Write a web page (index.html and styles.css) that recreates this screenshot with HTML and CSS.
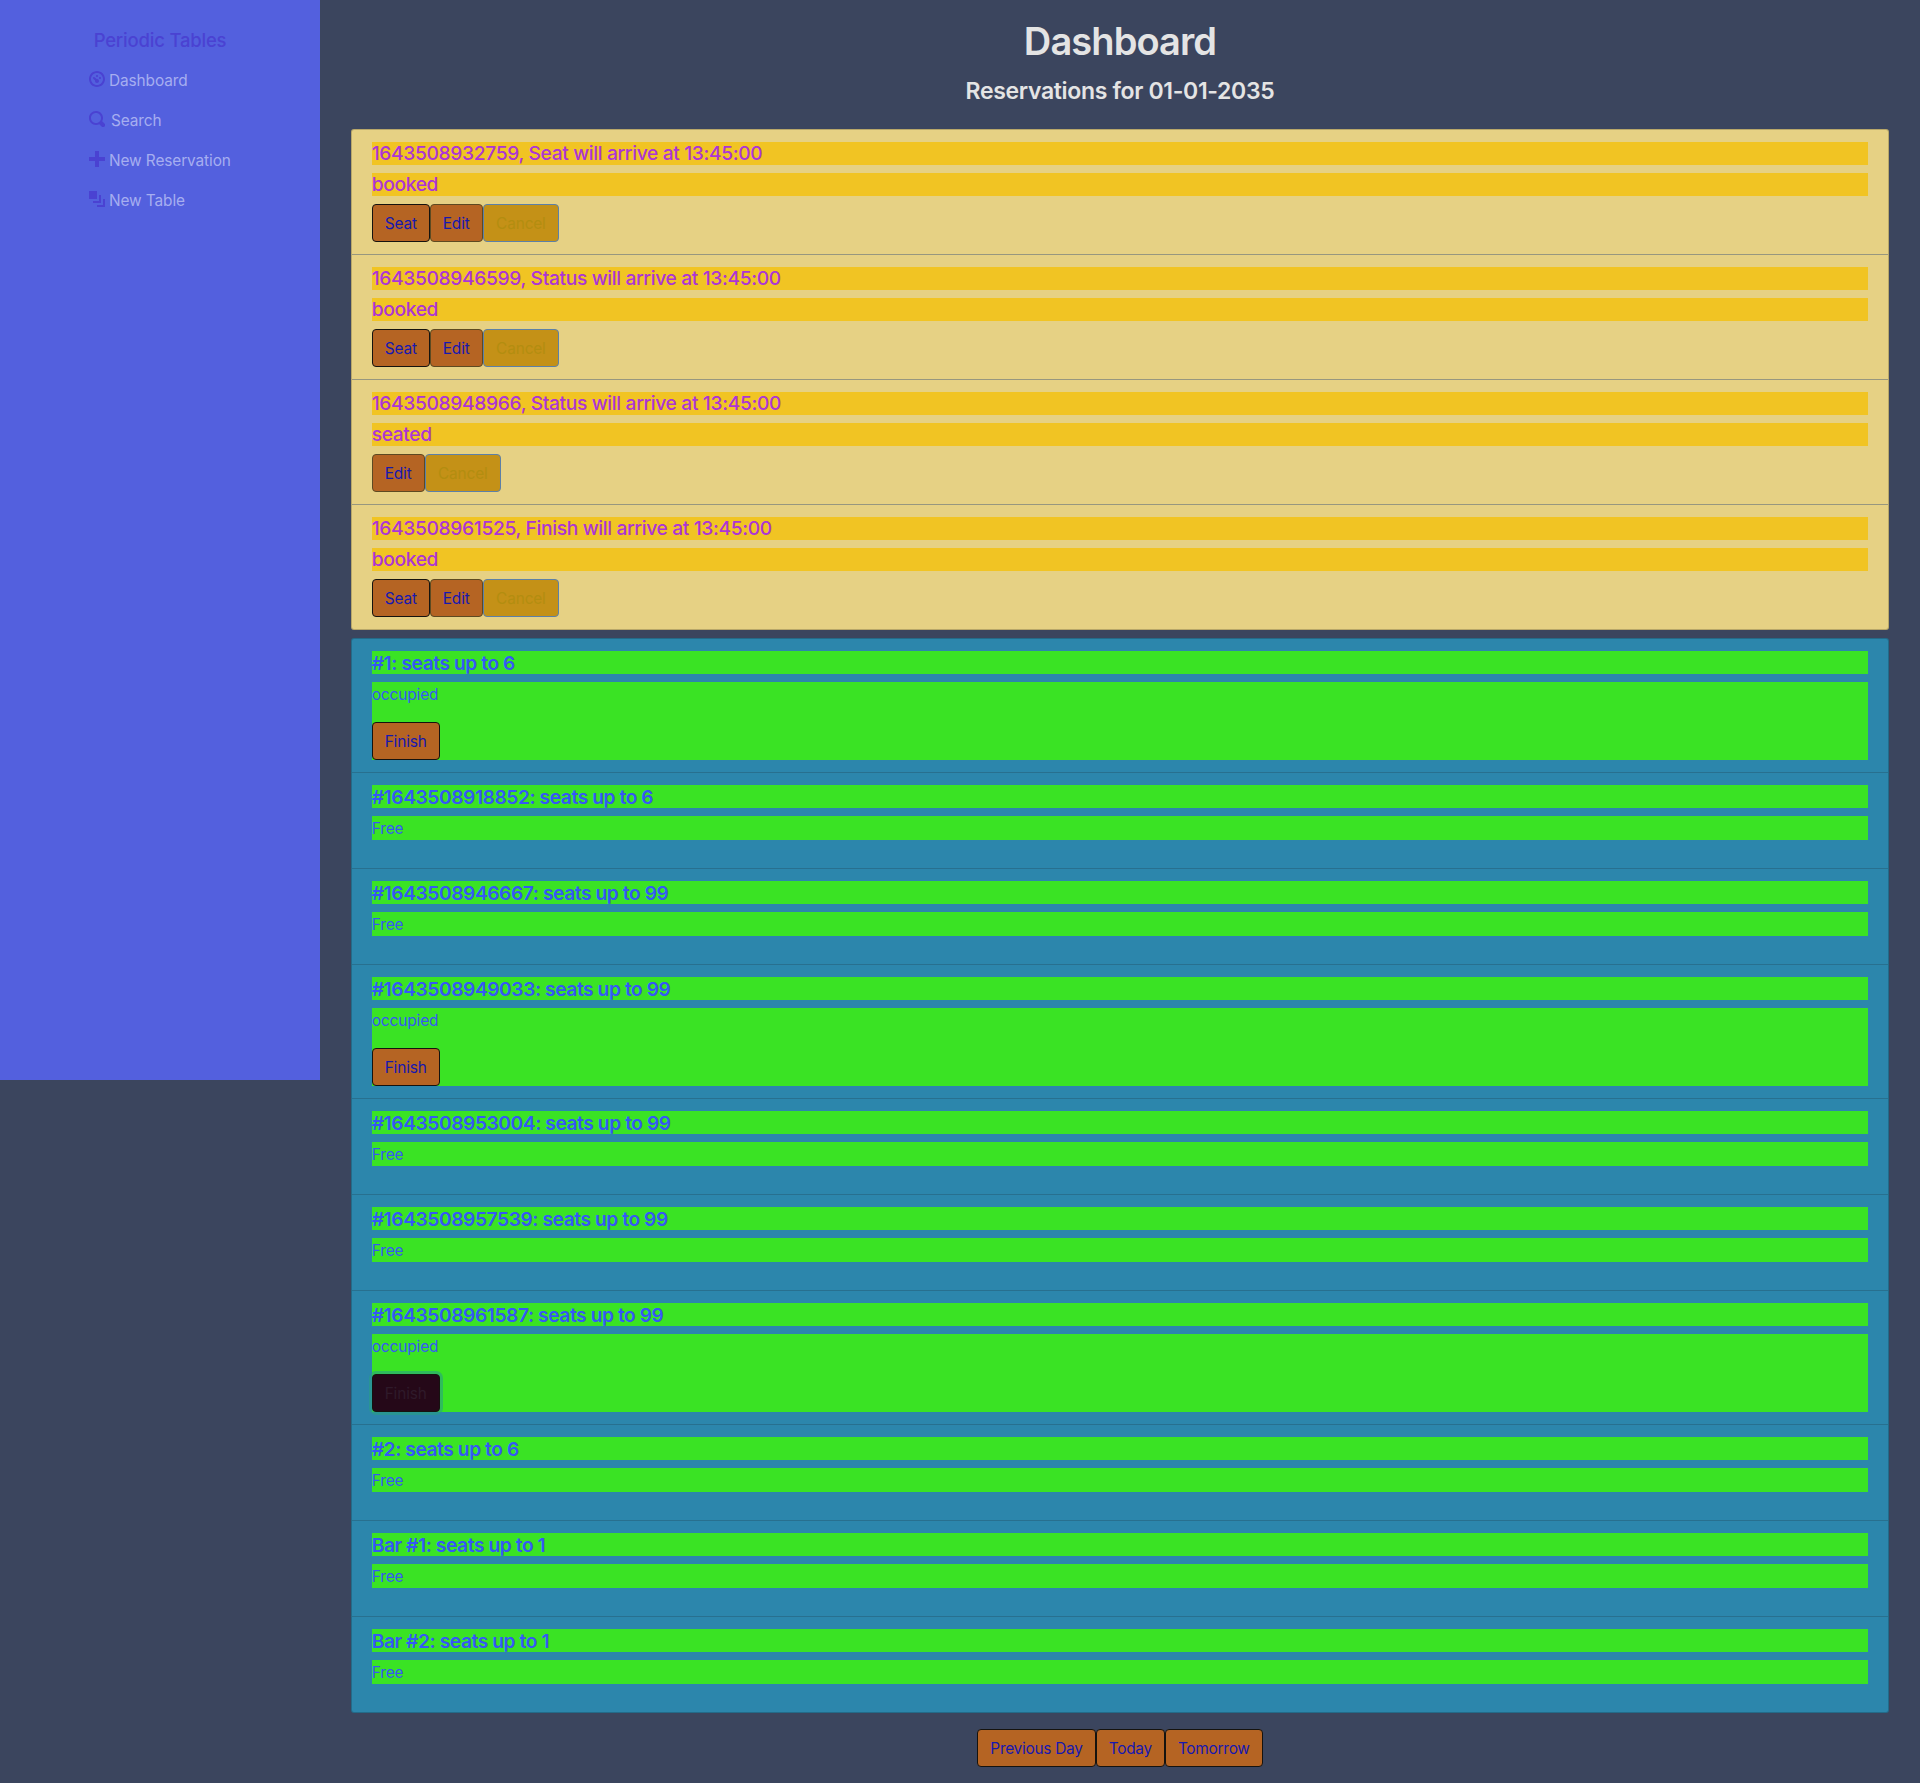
FILE: index.html
```html
<!DOCTYPE html>
<html lang="en">
<head>
  <meta charset="UTF-8">
  <title>Periodic Tables</title>
  <link rel="stylesheet" href="styles.css">
</head>
<body>

  <div class="layout">

    <!-- Sidebar -->
    <nav class="sidebar">
      <div class="brand">Periodic Tables</div>
      <ul class="nav-list">
        <li class="nav-item">
          <svg class="nav-icon" viewBox="0 0 8 8"><path d="M4 0c-2.2 0-4 1.8-4 4s1.8 4 4 4 4-1.8 4-4-1.8-4-4-4zm0 1c1.66 0 3 1.34 3 3s-1.34 3-3 3-3-1.34-3-3 1.34-3 3-3zm0 1c-.28 0-.5.22-.5.5s.22.5.5.5.5-.22.5-.5-.22-.5-.5-.5zm-1.66 1a.5.5 0 0 0-.19.84l.91.91c-.02.08-.06.16-.06.25 0 .55.45 1 1 1s1-.45 1-1-.45-1-1-1c-.09 0-.17.04-.25.06l-.91-.91a.5.5 0 0 0-.44-.16.5.5 0 0 0-.06 0zm3.16 0c-.28 0-.5.22-.5.5s.22.5.5.5.5-.22.5-.5-.22-.5-.5-.5z"/></svg>
          <span>Dashboard</span>
        </li>
        <li class="nav-item nav-item-search">
          <svg class="nav-icon" viewBox="0 0 8 8"><path d="M3.5 0c-1.93 0-3.5 1.57-3.5 3.5s1.57 3.5 3.5 3.5c.59 0 1.17-.14 1.66-.41a1 1 0 0 0 .13.13l1 1a1.02 1.02 0 1 0 1.44-1.44l-1-1a1 1 0 0 0-.16-.13c.27-.49.44-1.06.44-1.66 0-1.93-1.57-3.5-3.5-3.5zm0 1c1.39 0 2.5 1.11 2.5 2.5 0 .66-.24 1.27-.66 1.72-.01.01-.02.02-.03.03a1 1 0 0 0-.13.13c-.44.4-1.04.63-1.69.63-1.39 0-2.5-1.11-2.5-2.5s1.11-2.5 2.5-2.5z"/></svg>
          <span>Search</span>
        </li>
        <li class="nav-item">
          <svg class="nav-icon" viewBox="0 0 8 8"><path d="M3 0v3h-3v2h3v3h2v-3h3v-2h-3v-3h-2z"/></svg>
          <span>New Reservation</span>
        </li>
        <li class="nav-item">
          <svg class="nav-icon" viewBox="0 0 8 8"><path d="M0 0v4h4v-4h-4zm5 2v3h-3v1h4v-4h-1zm2 2v3h-3v1h4v-4h-1z"/></svg>
          <span>New Table</span>
        </li>
      </ul>
    </nav>

    <!-- Main content -->
    <main class="main">
      <h1 class="page-title">Dashboard</h1>
      <h2 class="page-date">Reservations for 01-01-2035</h2>

      <!-- Reservations -->
      <ul class="card card-reservations">
        <li class="row">
          <h5 class="row-title">1643508932759, Seat will arrive at 13:45:00</h5>
          <h5 class="row-title">booked</h5>
          <div class="btn-row">
            <button class="btn btn-seat">Seat</button><button class="btn btn-edit">Edit</button><button class="btn btn-cancel">Cancel</button>
          </div>
        </li>
        <li class="row">
          <h5 class="row-title">1643508946599, Status will arrive at 13:45:00</h5>
          <h5 class="row-title">booked</h5>
          <div class="btn-row">
            <button class="btn btn-seat">Seat</button><button class="btn btn-edit">Edit</button><button class="btn btn-cancel">Cancel</button>
          </div>
        </li>
        <li class="row">
          <h5 class="row-title">1643508948966, Status will arrive at 13:45:00</h5>
          <h5 class="row-title">seated</h5>
          <div class="btn-row">
            <button class="btn btn-edit">Edit</button><button class="btn btn-cancel">Cancel</button>
          </div>
        </li>
        <li class="row">
          <h5 class="row-title">1643508961525, Finish will arrive at 13:45:00</h5>
          <h5 class="row-title">booked</h5>
          <div class="btn-row">
            <button class="btn btn-seat">Seat</button><button class="btn btn-edit">Edit</button><button class="btn btn-cancel">Cancel</button>
          </div>
        </li>
      </ul>

      <!-- Tables -->
      <ul class="card card-tables">
        <li class="row">
          <h5 class="row-title">#1: seats up to 6</h5>
          <div class="table-status">
            <p>occupied</p>
            <button class="btn btn-finish">Finish</button>
          </div>
        </li>
        <li class="row">
          <h5 class="row-title">#1643508918852: seats up to 6</h5>
          <div class="table-status"><p>Free</p></div>
        </li>
        <li class="row">
          <h5 class="row-title">#1643508946667: seats up to 99</h5>
          <div class="table-status"><p>Free</p></div>
        </li>
        <li class="row">
          <h5 class="row-title">#1643508949033: seats up to 99</h5>
          <div class="table-status">
            <p>occupied</p>
            <button class="btn btn-finish">Finish</button>
          </div>
        </li>
        <li class="row">
          <h5 class="row-title">#1643508953004: seats up to 99</h5>
          <div class="table-status"><p>Free</p></div>
        </li>
        <li class="row">
          <h5 class="row-title">#1643508957539: seats up to 99</h5>
          <div class="table-status"><p>Free</p></div>
        </li>
        <li class="row">
          <h5 class="row-title">#1643508961587: seats up to 99</h5>
          <div class="table-status">
            <p>occupied</p>
            <button class="btn btn-finish btn-focus">Finish</button>
          </div>
        </li>
        <li class="row">
          <h5 class="row-title">#2: seats up to 6</h5>
          <div class="table-status"><p>Free</p></div>
        </li>
        <li class="row">
          <h5 class="row-title">Bar #1: seats up to 1</h5>
          <div class="table-status"><p>Free</p></div>
        </li>
        <li class="row">
          <h5 class="row-title">Bar #2: seats up to 1</h5>
          <div class="table-status"><p>Free</p></div>
        </li>
      </ul>

      <!-- Day navigation -->
      <div class="day-nav">
        <button class="btn">Previous Day</button><button class="btn">Today</button><button class="btn">Tomorrow</button>
      </div>
    </main>

  </div>

</body>
</html>
```

FILE: styles.css
```css
/* Global & Body */
body {
  margin: 0;
  font-family: Inter, 'Noto Sans', sans-serif;
  font-size: 15.4px;
  background: #3b455e;
  color: #e4e4e4;
}

ul {
  margin: 0;
  padding: 0;
  list-style: none;
}

.layout {
  display: flex;
  align-items: flex-start;
}

/* Sidebar */
.sidebar {
  flex: 0 0 320px;
  height: 1080px;
  box-sizing: border-box;
  padding-top: 28px;
  background: #5360de;
}
.brand {
  text-align: center;
  font-size: 18.5px;
  font-weight: 500;
  line-height: 24px;
  letter-spacing: -0.2px;
  color: #4a42d2;
}
.nav-list {
  margin-top: 8px;
  padding-left: 89px;
  letter-spacing: -0.1px;
}
.nav-item {
  display: flex;
  align-items: center;
  gap: 4px;
  height: 40px;
  color: #a6aef0;
}
.nav-item-search {
  gap: 6px;
}
.nav-icon {
  width: 16px;
  height: 16px;
  margin-top: -2px;
  fill: #4a42d2;
}

/* Main column */
.main {
  flex: 1;
  min-width: 0;
  padding: 0 30.7px 16px;
}
.page-title {
  margin: 0;
  padding-top: 18px;
  text-align: center;
  font-size: 38px;
  font-weight: 600;
  line-height: 46px;
  letter-spacing: -0.9px;
}
.page-date {
  margin: 13px 0 0;
  text-align: center;
  font-size: 23px;
  font-weight: 600;
  line-height: 28px;
  letter-spacing: -0.33px;
}

/* Cards */
.card {
  border: 1px solid rgba(0,0,0,0.2);
  border-radius: 3px;
}
.card-reservations {
  margin-top: 24px;
  background: #e6d184;
}
.card-tables {
  margin-top: 8px;
  background: #2c86ac;
}
.row {
  padding: 12px 20px 12px;
  border-bottom: 1px solid #97977f;
}
.row:last-child {
  border-bottom: none;
}
.card-tables .row {
  border-bottom-color: #28708f;
}
.card-tables .row:last-child {
  border-bottom: none;
}

.row-title {
  margin: 0 0 8px;
  font-size: 19.2px;
  font-weight: 500;
  line-height: 23px;
  letter-spacing: -0.34px;
}
.card-reservations .row-title {
  background: #f1c423;
  color: #ac35d6;
}
.card-tables .row-title {
  padding-top: 2px;
  line-height: 21px;
  font-weight: 600;
  letter-spacing: -0.42px;
  background: #3ae324;
  color: #3558f5;
}

/* Free / occupied block */
.table-status {
  background: #3ae324;
  color: #3558f5;
}
.table-status p {
  margin: 0 0 16px;
  padding-top: 2px;
  line-height: 22px;
  letter-spacing: -0.1px;
}

/* Buttons */
.btn {
  box-sizing: border-box;
  height: 38px;
  padding: 0 12px;
  font-family: inherit;
  font-size: 15.4px;
  letter-spacing: -0.15px;
  vertical-align: top;
  border: 1px solid #15130f;
  border-radius: 4px;
  background: #b56423;
  color: #1518b0;
}
.btn-edit {
  border-color: #5d4a22;
}
.btn-cancel {
  padding: 0 12.5px;
  border-color: #5c80a8;
  background: #c49117;
  color: #b38d10;
}
.btn-finish {
  display: block;
}
.btn-focus {
  background: #250818;
  color: #2f1a2a;
  box-shadow: 0 0 0 3px rgba(40,160,130,0.6);
}

.btn-row {
  height: 38px;
}

.day-nav {
  margin-top: 16px;
  text-align: center;
}
.day-nav .btn {
  letter-spacing: -0.25px;
}
```
